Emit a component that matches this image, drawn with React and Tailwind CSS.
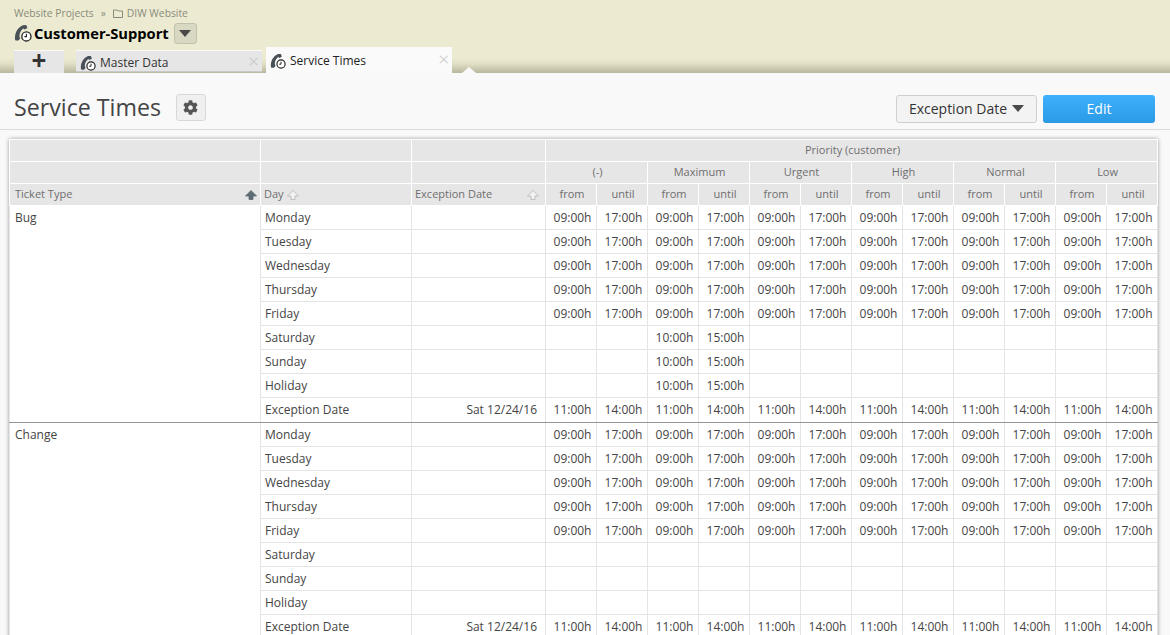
import React from 'react';
import { FaCog } from 'react-icons/fa';

const FONT = "font-['Open_Sans','Noto_Sans',sans-serif]";

const PhoneClock = ({ size = 18 }) => (
  <svg width={size} height={size} viewBox="0 0 18 18" className="shrink-0">
    <path d="M1 15.5 C0.5 9 3.5 3.5 9 1.2 L12.2 1 L13.4 4 L10.8 5.6 L9.2 4.6 C6.8 6.4 5.4 9.4 5.4 12.4 L6.2 14.6 L4.4 16.6 L1.6 16.6 Z" fill="#4a5058" />
    <circle cx="12.4" cy="12.4" r="4.6" fill="#fff" stroke="#222" strokeWidth="1.3" />
    <path d="M12.4 9.8 V12.6 H10.4" fill="none" stroke="#222" strokeWidth="1.1" />
  </svg>
);

const Caret = ({ className }) => (
  <svg width="12" height="7" viewBox="0 0 12 7" className={className}>
    <path d="M0 0 H12 L6 7 Z" fill="#4a4a4a" />
  </svg>
);

const SortArrow = ({ dark }) => (
  <svg width="12" height="10" viewBox="0 0 12 10" className="shrink-0">
    <path
      d="M6 0.5 L11.5 6 H8 V9.5 H4 V6 H0.5 Z"
      fill={dark ? '#5d6b73' : '#f2f2f2'}
      stroke={dark ? '#5d6b73' : '#b5b5b5'}
      strokeWidth="0.8"
    />
  </svg>
);

const Tab = ({ label, active }) => (
  <div
    className={
      active
        ? 'w-[186px] h-[26px] bg-[#fafafa] flex items-center pl-[4px] pr-[3px] pt-[2px] text-[12px] text-[#222]'
        : 'w-[186px] h-[22px] mt-[3px] bg-[#e6e6e6] border-t border-b border-t-[#fafafa] border-b-[#c9c9c9] flex items-center pl-[4px] pr-[3px] pt-[3px] text-[12px] text-[#333] ml-[12px] mr-[4px]'
    }
  >
    <PhoneClock size={16} />
    <span className="ml-[4px] flex-1">{label}</span>
    <span className="text-[#c4c4c4] text-[19px] leading-none font-light -mt-[3px]">×</span>
  </div>
);

const DAYS = ['Monday', 'Tuesday', 'Wednesday', 'Thursday', 'Friday', 'Saturday', 'Sunday', 'Holiday', 'Exception Date'];
const PRIORITIES = ['(-)', 'Maximum', 'Urgent', 'High', 'Normal', 'Low'];

// which hours a cell shows, depends on ticket type and day
const getTimes = (group, day, col) => {
  if (day === 'Exception Date') return ['11:00h', '14:00h'];
  if (day === 'Saturday' || day === 'Sunday' || day === 'Holiday') {
    if (group === 'Bug' && col === 1) return ['10:00h', '15:00h'];
    return ['', ''];
  }
  return ['09:00h', '17:00h'];
};

const th = 'bg-[#e6e6e6] border border-white font-normal text-[#6e6e6e] text-[11px] h-[22px] p-0';
const thCenter = `${th} pl-[2px]`;
const td = 'border border-[#e4e4e4] text-[#444] text-[12px] h-[24px] p-0 pt-[1px]';
const sep = 'border-b-[#949494] h-[25px] pb-[2px]';

const TicketGroup = ({ name, last }) =>
  DAYS.map((day, i) => {
    const lastRow = i === 8 && !last;
    return (
      <tr key={day}>
        {i === 0 && (
          <td rowSpan={9} className={`align-top pl-[5px] pt-[3px] text-[#444] text-[12px] border border-[#e4e4e4] ${last ? '' : 'border-b-[#949494]'}`}>
            {name}
          </td>
        )}
        <td className={`${td} pl-[4px] ${lastRow ? sep : ''}`}>{day}</td>
        <td className={`${td} text-right pr-[8px] ${lastRow ? sep : ''}`}>{day === 'Exception Date' ? 'Sat 12/24/16' : ''}</td>
        {PRIORITIES.map((p, col) =>
          getTimes(name, day, col).map((t, j) => (
            <td key={p + j} className={`${td} text-center pl-[3px] ${lastRow ? sep : ''}`}>{t}</td>
          ))
        )}
      </tr>
    );
  });

const App = () => {
  return (
    <div className={`${FONT} w-[1170px] h-[635px] overflow-hidden bg-[#f9f9f9]`}>
      {/* Top bar */}
      <div className="h-[73px] bg-[linear-gradient(#ecebd1_0,#ecebd1_58px,#e0dfc4_64px,#b8b79f_73px)] pt-[6px]">
        <div className="pl-[14px] h-[15px] flex items-center text-[10.3px] text-[#8a8a7c]">
          <span>Website Projects</span>
          <span className="mx-[7px]">»</span>
          <svg width="10" height="9" viewBox="0 0 10 9" className="mr-[4px]">
            <path d="M0.5 1 H4 L5 2 H9.5 V8.5 H0.5 Z" fill="none" stroke="#8a8a7c" />
          </svg>
          <span>DIW Website</span>
        </div>
        <div className="pl-[14px] mt-[1px] h-[22px] flex items-center">
          <PhoneClock />
          <span className="ml-[2px] text-[14.7px] font-bold text-black">Customer-Support</span>
          <button className="ml-[5px] w-[23px] h-[21px] rounded-[3px] bg-[#d9d8c2] border border-[#c2c1ab] flex items-center justify-center">
            <Caret />
          </button>
        </div>
        <div className="pl-[14px] flex items-start mt-[3px] relative">
          <div className="w-[50px] h-[23px] mt-[3px] bg-[#e6e6e6] border-t border-t-[#fafafa] flex items-center justify-center pb-[4px] text-[26px] font-bold leading-none text-[#333]">
            +
          </div>
          <Tab label="Master Data" />
          <Tab label="Service Times" active />
          <div className="absolute left-[462px] top-[20px] w-0 h-0 border-l-[7px] border-r-[7px] border-b-[6px] border-l-transparent border-r-transparent border-b-[#fafafa]" />
        </div>
      </div>

      {/* Page title */}
      <div className="h-[57px] border-b border-[#dcdcdc] flex items-center pl-[14px] pr-[15px] pt-[15px]">
        <h1 className="text-[23.2px] font-normal text-[#444] leading-none mb-[2px]">Service Times</h1>
        <button className="ml-[15px] mb-[2px] w-[30px] h-[27px] rounded-[3px] bg-[#f0f0f0] border border-[#d8d8d8] flex items-center justify-center text-[#555]">
          <FaCog size={15} />
        </button>
        <button className="ml-auto w-[141px] h-[28px] rounded-[3px] bg-[#f3f3f3] border border-[#cfcfcf] flex items-center justify-center text-[14px] text-[#333]">
          Exception Date
          <Caret className="ml-[5px]" />
        </button>
        <button className="ml-[6px] w-[112px] h-[28px] rounded-[3px] bg-[linear-gradient(#3fb0fd,#2a9ae6)] text-white text-[14px]">
          Edit
        </button>
      </div>

      {/* Service times table */}
      <div className="pt-[9px] pl-[9px]">
        <table className="table-fixed border-collapse w-[1149px] bg-white shadow-[0_0_4px_#999]">
          <colgroup>
            <col className="w-[251px]" />
            <col className="w-[151px]" />
            <col className="w-[134px]" />
            {Array.from({ length: 12 }, (_, i) => (
              <col key={i} className="w-[51px]" />
            ))}
          </colgroup>
          <thead>
            <tr>
              <th className={th} />
              <th className={th} />
              <th className={th} />
              <th colSpan={12} className={thCenter}>Priority (customer)</th>
            </tr>
            <tr>
              <th className={th} />
              <th className={th} />
              <th className={th} />
              {PRIORITIES.map((p) => (
                <th key={p} colSpan={2} className={thCenter}>{p}</th>
              ))}
            </tr>
            <tr>
              <th className={th}>
                <div className="flex items-center justify-between pl-[5px] pr-[3px]">
                  Ticket Type <SortArrow dark />
                </div>
              </th>
              <th className={th}>
                <div className="flex items-center pl-[3px] gap-[3px]">
                  Day <SortArrow />
                </div>
              </th>
              <th className={th}>
                <div className="flex items-center justify-between pl-[3px] pr-[6px]">
                  Exception Date <SortArrow />
                </div>
              </th>
              {PRIORITIES.map((p) => (
                <React.Fragment key={p}>
                  <th className={thCenter}>from</th>
                  <th className={thCenter}>until</th>
                </React.Fragment>
              ))}
            </tr>
          </thead>
          <tbody>
            <TicketGroup name="Bug" />
            <TicketGroup name="Change" last />
          </tbody>
        </table>
      </div>
    </div>
  );
};

export default App;
